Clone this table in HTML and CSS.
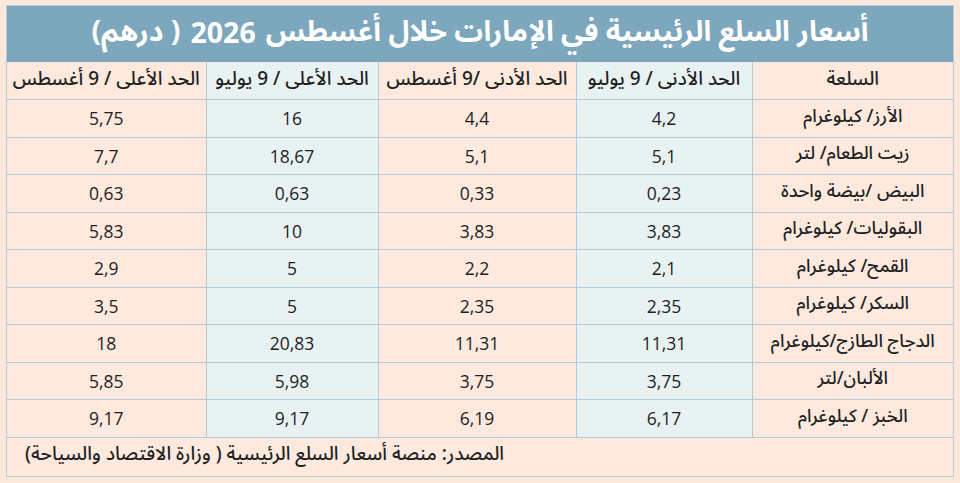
FILE: index.html
```html
<!DOCTYPE html>
<html lang="ar" dir="rtl">
<head>
<meta charset="utf-8">
<title>أسعار السلع الرئيسية</title>
<link rel="stylesheet" href="styles.css">
</head>
<body>
<div class="frame">
  <div class="title">أسعار السلع الرئيسية في الإمارات خلال أغسطس <span class="year">2026</span> ( درهم)</div>
  <table class="prices">
    <colgroup>
      <col class="c1"><col class="c2"><col class="c3"><col class="c4"><col class="c5">
    </colgroup>
    <thead>
      <tr>
        <th class="peach">السلعة</th>
        <th class="blue">الحد الأدنى / 9 يوليو</th>
        <th class="peach">الحد الأدنى /9 أغسطس</th>
        <th class="blue">الحد الأعلى / 9 يوليو</th>
        <th class="peach">الحد الأعلى / 9 أغسطس</th>
      </tr>
    </thead>
    <tbody>
      <tr><td class="peach item">الأرز/ كيلوغرام</td><td class="blue num">4,2</td><td class="peach num">4,4</td><td class="blue num">16</td><td class="peach num">5,75</td></tr>
      <tr><td class="peach item">زيت الطعام/ لتر</td><td class="blue num">5,1</td><td class="peach num">5,1</td><td class="blue num">18,67</td><td class="peach num">7,7</td></tr>
      <tr><td class="peach item">البيض /بيضة واحدة</td><td class="blue num">0,23</td><td class="peach num">0,33</td><td class="blue num">0,63</td><td class="peach num">0,63</td></tr>
      <tr><td class="peach item">البقوليات/ كيلوغرام</td><td class="blue num">3,83</td><td class="peach num">3,83</td><td class="blue num">10</td><td class="peach num">5,83</td></tr>
      <tr><td class="peach item">القمح/ كيلوغرام</td><td class="blue num">2,1</td><td class="peach num">2,2</td><td class="blue num">5</td><td class="peach num">2,9</td></tr>
      <tr><td class="peach item">السكر/ كيلوغرام</td><td class="blue num">2,35</td><td class="peach num">2,35</td><td class="blue num">5</td><td class="peach num">3,5</td></tr>
      <tr><td class="peach item">الدجاج الطازج/كيلوغرام</td><td class="blue num">11,31</td><td class="peach num">11,31</td><td class="blue num">20,83</td><td class="peach num">18</td></tr>
      <tr><td class="peach item">الألبان/لتر</td><td class="blue num">3,75</td><td class="peach num">3,75</td><td class="blue num">5,98</td><td class="peach num">5,85</td></tr>
      <tr><td class="peach item">الخبز / كيلوغرام</td><td class="blue num">6,17</td><td class="peach num">6,19</td><td class="blue num">9,17</td><td class="peach num">9,17</td></tr>
    </tbody>
    <tfoot>
      <tr class="foot"><td colspan="5" class="source">المصدر: منصة أسعار السلع الرئيسية ( وزارة الاقتصاد والسياحة)</td></tr>
    </tfoot>
  </table>
</div>
</body>
</html>
```

FILE: styles.css
```css
html, body {
  margin: 0;
  padding: 0;
  background: #fbe8dd;
}
body {
  padding: 5px 6px 8px 5px;
  font-family: "Noto Sans Arabic", "Noto Kufi Arabic", "DejaVu Sans", sans-serif;
  color: #1f1f1f;
}
.frame {
  width: 948px;
  box-sizing: border-box;
  border: 1px solid #b9cbd3;
}
.title {
  height: 56px;
  background: #7da7bd;
  color: #ffffff;
  font-weight: bold;
  font-size: 28.5px;
  display: flex;
  align-items: center;
  justify-content: center;
  white-space: nowrap;
  padding-bottom: 4px;
  box-sizing: border-box;
}
.year {
  font-family: "Open Sans", sans-serif;
  font-weight: 700;
  margin: 0 10px;
}
.num {
  font-family: "Open Sans", "DejaVu Sans", sans-serif;
}
.prices {
  width: 100%;
  border-collapse: collapse;
  table-layout: fixed;
}
.c1 { width: 201px; }
.c2 { width: 176px; }
.c3 { width: 198px; }
.c4 { width: 172px; }
.c5 { width: 199px; }
.prices tr {
  height: 37.5px;
}
.prices tr.foot {
  height: 39px;
}
.prices th, .prices td {
  padding: 0;
  text-align: center;
  vertical-align: middle;
  border: 1px solid #b3cad5;
  white-space: nowrap;
  line-height: 20px;
}
.prices th {
  font-weight: 500;
  font-size: 19px;
  padding-bottom: 4px;
}
.prices tr > :first-child { border-right: none; }
.prices tr > :last-child { border-left: none; }
.prices thead th { border-top: none; }
.prices tfoot td { border-bottom: none; }
.peach { background: #fde9de; }
.blue { background: #e9f2f3; }
.prices td.item {
  font-size: 18px;
  font-weight: 500;
  padding-bottom: 5px;
}
.prices td.num { font-size: 17.5px; font-weight: 500; }
.prices td.source {
  text-align: left;
  padding-left: 18px;
  padding-bottom: 5px;
  background: #fde9de;
  font-size: 19px;
  font-weight: 500;
}
```
